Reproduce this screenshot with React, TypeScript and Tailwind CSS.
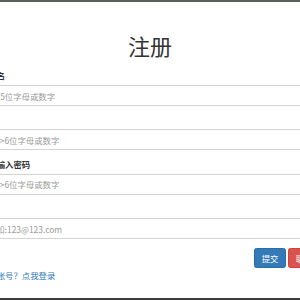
import React from 'react';
import clsx from 'clsx';

interface FieldProps {
    label: string;
    placeholder: string;
    type?: string;
    tight?: boolean;
}

const Field: React.FC<FieldProps> = ({ label, placeholder, type = 'text', tight }) => {
    return (
        <div className="flex flex-col mb-[7.4px]">
            <label className="h-[12px] leading-[12px] text-[8.4px] font-bold text-[#333] mb-[4px] whitespace-nowrap">
                {label}
            </label>
            <input
                type={type}
                placeholder={placeholder}
                className={clsx(
                    'h-[21px] w-full border border-[#d4d4d4] rounded-[2.4px] pr-[7px] text-[8.4px] text-[#555] bg-white outline-none placeholder:text-[#9a9a9a]',
                    tight ? 'pl-[2px]' : 'pl-[7px]',
                )}
            />
        </div>
    );
};

const App: React.FC = () => {
    return (
        <div
            className="w-[300px] h-[300px] overflow-hidden bg-white border-t-2 border-b-2 border-t-[#56625a] border-b-[#3c3c3c] flex flex-col"
            style={{ fontFamily: '"Noto Sans CJK SC", "Noto Sans", sans-serif' }}
        >
            <form className="-ml-5 w-[340px] flex flex-col">
                <h1 className="mt-[31px] mb-[12px] h-[24px] leading-[24px] text-[22px] font-normal text-center text-[#333]">
                    注册
                </h1>
                <Field label="用户名" placeholder="3-15位字母或数字" />
                <Field label="密码" placeholder="长度>6位字母或数字" type="password" tight />
                <Field label="再次输入密码" placeholder="长度>6位字母或数字" type="password" tight />
                <Field label="邮箱" placeholder="例如:123@123.com" />
                <div className="flex justify-end gap-[2px] mt-[1.6px]">
                    <button
                        type="button"
                        className="h-[20px] w-[32px] rounded-[2.4px] border border-[#2e6da4] bg-[#337ab7] text-white text-[8.4px] leading-none"
                    >
                        提交
                    </button>
                    <button
                        type="button"
                        className="h-[20px] w-[32px] rounded-[2.4px] border border-[#d43f3a] bg-[#d9534f] text-white text-[8.4px] leading-none"
                    >
                        取消
                    </button>
                </div>
                <a href="#" className="mt-[1px] h-[12px] leading-[12px] text-[8.4px] text-[#337ab7] whitespace-nowrap">
                    已有账号？点我登录
                </a>
            </form>
        </div>
    );
};

export default App;
